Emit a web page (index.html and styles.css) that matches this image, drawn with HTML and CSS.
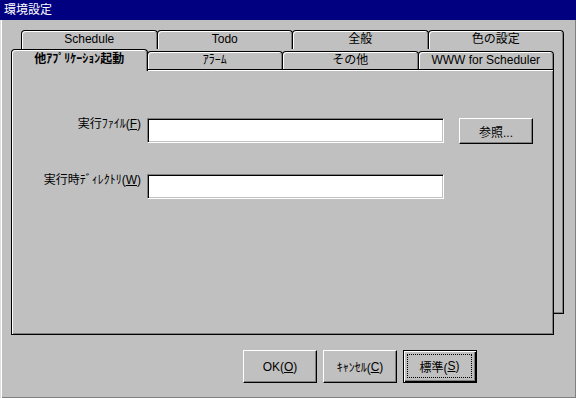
FILE: index.html
```html
<!DOCTYPE html>
<html lang="ja">
<head>
<meta charset="utf-8">
<title>環境設定</title>
<link rel="stylesheet" href="styles.css">
</head>
<body>
<div class="window">
  <div class="titlebar">環境設定</div>
  <div class="content">
    <div class="stack">
      <div class="layer back">
        <div class="tabrow">
          <div class="tab">Schedule</div>
          <div class="tab">Todo</div>
          <div class="tab">全般</div>
          <div class="tab">色の設定</div>
        </div>
        <div class="backbody"></div>
      </div>
      <div class="layer front">
        <div class="tabrow">
          <div class="tab selected">他ｱﾌﾟﾘｹｰｼｮﾝ起動</div>
          <div class="tab">ｱﾗｰﾑ</div>
          <div class="tab">その他</div>
          <div class="tab">WWW for Scheduler</div>
        </div>
        <div class="panel">
          <div class="form">
            <label class="label">実行ﾌｧｲﾙ(<u>F</u>)</label>
            <div class="field"></div>
            <div class="btn browse">参照...</div>
            <label class="label">実行時ﾃﾞｨﾚｸﾄﾘ(<u>W</u>)</label>
            <div class="field"></div>
            <div></div>
          </div>
        </div>
      </div>
    </div>
    <div class="buttons">
      <div class="btn">OK(<u>O</u>)</div>
      <div class="btn">ｷｬﾝｾﾙ(<u>C</u>)</div>
      <div class="btn default"><span class="focus">標準(<u>S</u>)</span></div>
    </div>
  </div>
</div>
</body>
</html>
```
FILE: styles.css
```css
* { box-sizing: border-box; }
html, body { margin: 0; padding: 0; }
body {
  font-family: "Liberation Sans", "Noto Sans CJK JP", sans-serif;
  font-size: 12px;
  color: #000;
  background: #c0c0c0;
}
.window {
  width: 576px;
  height: 398px;
  background: #c0c0c0;
  box-shadow: inset 1px 0 #dfdfdf, inset 2px 0 #fff, inset -1px -1px #808080;
  display: flex;
  flex-direction: column;
  overflow: hidden;
}
.titlebar {
  height: 20px;
  background: #000080;
  color: #fff;
  padding: 1px 0 0 4px;
  line-height: 18px;
  font-size: 12px;
}
.content {
  padding: 10px 0 0 11px;
}
.stack {
  display: grid;
  width: 553px;
}
.layer {
  grid-area: 1 / 1;
  display: flex;
  flex-direction: column;
}
.back {
  margin-left: 10px;
  height: 284px;
}
.front {
  margin-top: 19px;
  margin-right: 10px;
  z-index: 1;
}
.tabrow {
  display: flex;
}
.back .tabrow { height: 19px; }
.front .tabrow { height: 20px; align-items: flex-end; }
.tab {
  flex: 1;
  height: 19px;
  border: 1px solid #000;
  border-bottom: 0;
  border-radius: 4px 4px 0 0;
  box-shadow: inset 1px 1px #fff, inset -1px 0 #808080;
  background: #c0c0c0;
  text-align: center;
  line-height: 17px;
  white-space: nowrap;
}
.tab + .tab { margin-left: -1px; }
.front .tab { height: 18px; line-height: 16px; }
.front .tab.selected {
  height: 22px;
  margin-bottom: -2px;
  z-index: 2;
  font-weight: bold;
  line-height: 19px;
}
.backbody {
  flex: 1;
  border: 1px solid #000;
  border-top: 0;
  box-shadow: inset 1px 0 #fff, inset -1px -1px #808080;
}
.panel {
  height: 266px;
  border: 1px solid #000;
  box-shadow: inset 1px 1px #fff, inset -1px -1px #808080;
  background: #c0c0c0;
  padding-top: 48px;
}
.form {
  display: grid;
  grid-template-columns: 135px 297px 89px;
  grid-auto-rows: 25px;
  row-gap: 31px;
}
.label {
  text-align: right;
  padding-right: 6px;
  line-height: 12px;
  white-space: nowrap;
  align-self: start;
}
.field {
  height: 25px;
  background: #fff;
  border: 1px solid;
  border-color: #808080 #fff #fff #808080;
  box-shadow: inset 1px 1px #000, inset -1px -1px #c0c0c0;
}
.btn {
  display: flex;
  align-items: center;
  justify-content: center;
  width: 74px;
  border: 1px solid;
  border-color: #fff #000 #000 #fff;
  box-shadow: inset -1px -1px #808080;
  background: #c0c0c0;
  white-space: nowrap;
}
.browse {
  margin-left: 15px;
  height: 26px;
}
.buttons {
  display: flex;
  gap: 6px;
  margin-top: 15px;
  padding-left: 232px;
}
.buttons .btn { height: 33px; }
.btn.default {
  border: 1px solid #000;
  box-shadow: inset 1px 1px #fff, inset -1px -1px #000, inset -2px -2px #808080;
  padding: 4px;
}
.focus {
  flex: 1;
  align-self: stretch;
  display: flex;
  align-items: center;
  justify-content: center;
  outline: 1px dotted #000;
  outline-offset: 0;
  margin: 0 1px 1px 0;
}
u { text-decoration: underline; text-underline-offset: 1px; }
```
